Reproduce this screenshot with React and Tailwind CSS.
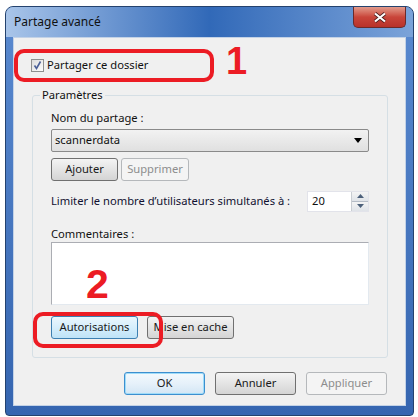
const FONT = "font-['Noto_Sans',sans-serif] text-[11.2px]"

function Btn({ children, variant = 'normal', className = '' }) {
  const styles = {
    normal: 'border-[#707070] bg-gradient-to-b from-[#f4f4f4] via-[#e4e4e4] to-[#d4d4d4] text-[#1a1a1a]',
    disabled: 'border-[#b5b8bb] bg-[#f4f4f4] text-[#8d8d8d]',
    hot: 'border-[#3c7fb1] bg-gradient-to-b from-[#eaf6fd] via-[#d5eefc] to-[#bfe3f7] text-[#1a1a1a]',
    def: 'border-[#3c8fcf] bg-gradient-to-b from-[#f3f9fd] via-[#e6f1fa] to-[#d3e6f5] text-[#1a1a1a] shadow-[inset_0_0_0_1px_#9fdcf9]',
  }
  return (
    <div className={`h-[23px] rounded-[3px] border flex items-center justify-center ${styles[variant]} ${className}`}>
      {children}
    </div>
  )
}

function Check() {
  return (
    <div className="w-[13px] h-[13px] border border-[#8e8f8f] bg-gradient-to-br from-[#dcdcdc] to-[#fdfdfd] flex items-center justify-center">
      <svg width="11" height="11" viewBox="0 0 11 11">
        <path d="M2.5 5.5 L4.5 8.5 L8.5 1.5" fill="none" stroke="#4a5f97" strokeWidth="1.6" />
      </svg>
    </div>
  )
}

export default function App() {
  return (
    <div className={`w-[418px] h-[417px] bg-white pt-[6px] pl-[5px] ${FONT}`}>
      <div className="relative w-[409px] h-[410px] rounded-t-[8px] rounded-b-[4px] border border-[#24426e] bg-gradient-to-b from-[#5a8ad0] to-[#3565b0] flex flex-col">
        <div className="h-[30px] rounded-t-[7px] bg-gradient-to-r from-[#a9c5e9] via-[#3169b8] to-[#7ba3d9] flex items-center pl-[8px] text-[12px] text-[#101010]">
          Partage avancé
        </div>
        <div className="absolute right-[7px] top-0 w-[53px] h-[21px] rounded-b-[5px] border border-t-0 border-[#6b2a2a] bg-gradient-to-b from-[#e19a8c] via-[#c9453a] to-[#b8322a] flex items-center justify-center">
          <svg width="14" height="11" viewBox="0 0 14 11">
            <path d="M2 1.5 L12 9.5 M12 1.5 L2 9.5" stroke="#4a1f1f" strokeWidth="3.6" />
            <path d="M2 1.5 L12 9.5 M12 1.5 L2 9.5" stroke="#ffffff" strokeWidth="2.2" />
          </svg>
        </div>

        <div className="relative mx-[7px] mb-[9px] flex-1 bg-[#f0f0f0] border border-[#c3d2e6]">
          <div className="flex items-center gap-[3px] ml-[17px] mt-[20px] h-[15px] text-[#101010]">
            <Check />
            <span>Partager ce dossier</span>
          </div>

          <fieldset className="ml-[18px] mt-[14px] w-[356px] h-[271px] border border-[#d5dfe5] rounded-[3px] px-[18px]">
            <legend className="px-[2px] -ml-[11px] text-[#101010]">Paramètres</legend>
            <div className="mt-[6px] text-[#101010]">Nom du partage :</div>
            <div className="mt-[2px] h-[23px] border border-[#8a8a8a] rounded-[2px] bg-gradient-to-b from-[#f2f2f2] to-[#e0e0e0] flex items-center justify-between pl-[3px] pr-[6px] text-[#101010]">
              <span>scannerdata</span>
              <svg width="8" height="5" viewBox="0 0 8 5"><path d="M0 0 H8 L4 5 Z" fill="#000" /></svg>
            </div>
            <div className="mt-[6px] flex gap-[3px]">
              <Btn className="w-[67px]">Ajouter</Btn>
              <Btn variant="disabled" className="w-[68px]">Supprimer</Btn>
            </div>
            <div className="mt-[10px] flex items-center justify-between">
              <span className="text-[#101030]">Limiter le nombre d’utilisateurs simultanés à :</span>
              <div className="flex w-[62px] h-[21px] bg-white border border-[#e2e3ea]">
                <span className="flex-1 flex items-center pl-[4px] text-[#101010]">20</span>
                <div className="w-[17px] flex flex-col border-l border-[#c9cdd2]">
                  <div className="flex-1 flex items-center justify-center bg-gradient-to-b from-[#f4f4f4] to-[#dfe3e8] border-b border-[#b5bcc6]">
                    <svg width="7" height="4" viewBox="0 0 7 4"><path d="M0 4 L3.5 0 L7 4 Z" fill="#4c607a" /></svg>
                  </div>
                  <div className="flex-1 flex items-center justify-center bg-gradient-to-b from-[#f4f4f4] to-[#dfe3e8]">
                    <svg width="7" height="4" viewBox="0 0 7 4"><path d="M0 0 L7 0 L3.5 4 Z" fill="#4c607a" /></svg>
                  </div>
                </div>
              </div>
            </div>
            <div className="mt-[14px] text-[#101010]">Commentaires :</div>
            <div className="h-[63px] bg-white border-t border-l border-[#abadb3] border-r border-b border-r-[#e3e9ef] border-b-[#e3e9ef]" />
            <div className="mt-[11px] flex gap-[9px]">
              <Btn variant="hot" className="w-[87px]">Autorisations</Btn>
              <Btn className="w-[87px]">Mise en cache</Btn>
            </div>
          </fieldset>

          <div className="mt-[14px] flex justify-end gap-[10px] pr-[18px]">
            <Btn variant="def" className="w-[81px]">OK</Btn>
            <Btn className="w-[81px]">Annuler</Btn>
            <Btn variant="disabled" className="w-[81px]">Appliquer</Btn>
          </div>

          <div className="absolute left-0 top-[11px] w-[200px] h-[33px] border-[4px] border-[#ec1c24] rounded-[10px]" />
          <div className="absolute left-[212px] top-[4px] text-[#ec1c24] font-['Liberation_Sans',sans-serif] font-bold text-[38px] leading-[38px]">1</div>
          <div className="absolute left-[72px] top-[226px] text-[#ec1c24] font-['Liberation_Sans',sans-serif] font-bold text-[41px] leading-[41px]">2</div>
          <div className="absolute left-[19px] top-[274px] w-[130px] h-[36px] border-[4px] border-[#ec1c24] rounded-[10px]" />
        </div>
      </div>
    </div>
  )
}
